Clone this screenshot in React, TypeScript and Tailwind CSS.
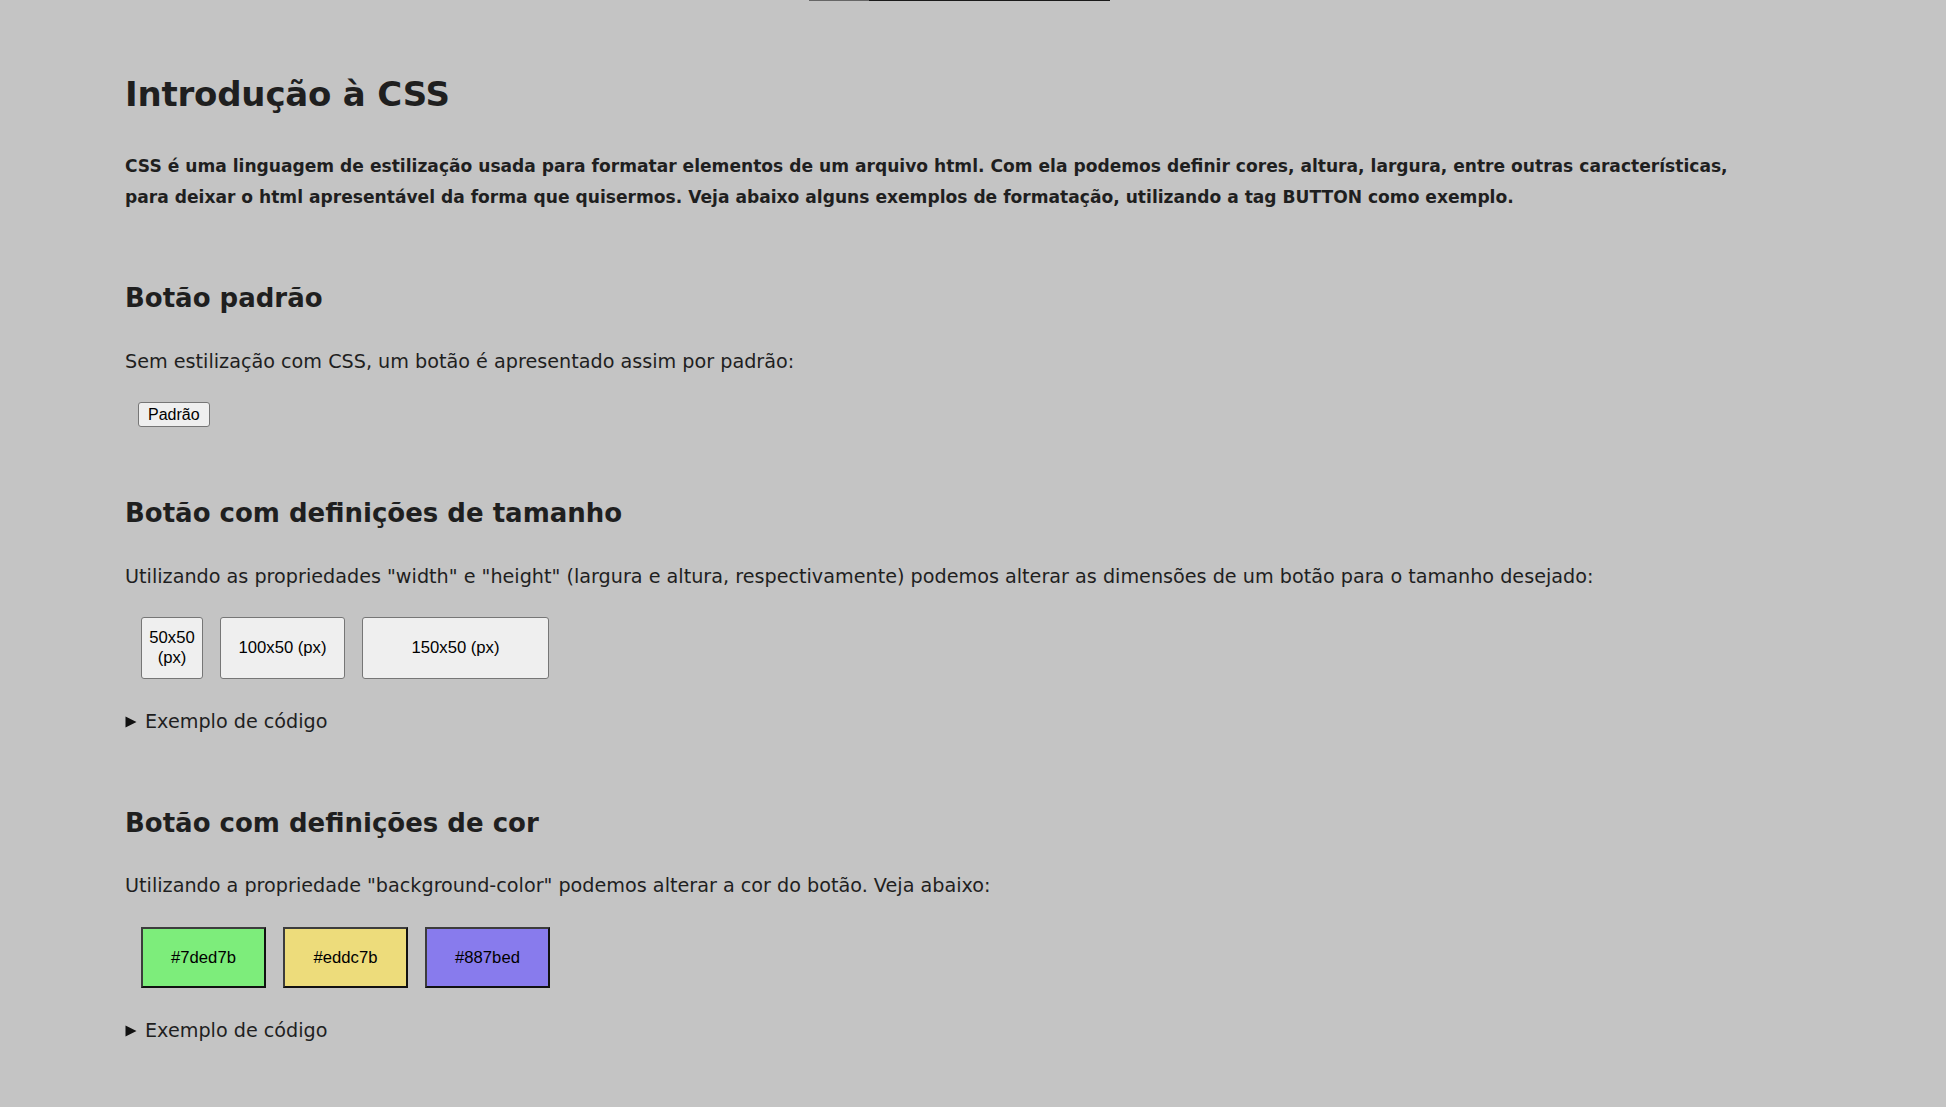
import React from "react";

const font = { fontFamily: '"DejaVu Sans", Verdana, sans-serif' };

function Summary() {
  return (
    <div className="flex items-center h-[28px] text-[19.2px] leading-[28px] text-[#1f1f1f]">
      <svg width="12" height="12" viewBox="0 0 12 12" className="mr-[8px] shrink-0">
        <polygon points="0.5,0.5 11.5,6 0.5,11.5" fill="#111" />
      </svg>
      <span>Exemplo de código</span>
    </div>
  );
}

const btnFont = { fontFamily: '"Liberation Sans", Arial, sans-serif' };

export default function App() {
  return (
    <div className="min-h-[1107px] w-full bg-[#c4c4c4] text-[#1f1f1f]" style={font}>
      <div className="flex h-[1px]">
        <div className="ml-[809px] w-[60px] h-[1px] bg-[#666]" />
        <div className="w-[241px] h-[1px] bg-[#1a1a1a]" />
      </div>
      <div className="pl-[125px] flex flex-col items-start w-[1760px]">
        <h1 className="mt-[71px] h-[44px] text-[34px] leading-[44px] font-bold tracking-[-0.2px]">Introdução à CSS</h1>
        <p className="mt-[35px] text-[17.1px] leading-[31px] font-bold w-full">
          CSS é uma linguagem de estilização usada para formatar elementos de um arquivo html. Com ela podemos definir cores, altura, largura, entre outras características, para deixar o html apresentável da forma que quisermos. Veja abaixo alguns exemplos de formatação, utilizando a tag BUTTON como exemplo.
        </p>

        <h2 className="mt-[67px] h-[36px] text-[26px] leading-[36px] font-bold">Botão padrão</h2>
        <p className="mt-[32px] h-[28px] text-[19.2px] leading-[28px]">Sem estilização com CSS, um botão é apresentado assim por padrão:</p>
        <button
          className="mt-[26px] ml-[13px] h-[25px] px-[9px] text-[16px] leading-[19px] text-black bg-[#efefef] border border-[#767676] rounded-[3px]"
          style={btnFont}
        >
          Padrão
        </button>

        <h2 className="mt-[68px] h-[36px] text-[26px] leading-[36px] font-bold">Botão com definições de tamanho</h2>
        <p className="mt-[32px] h-[28px] text-[19.2px] leading-[28px] whitespace-nowrap">
          Utilizando as propriedades "width" e "height" (largura e altura, respectivamente) podemos alterar as dimensões de um botão para o tamanho desejado:
        </p>
        <div className="mt-[26px] ml-[16px] flex gap-[17px]" style={btnFont}>
          <button className="w-[62px] h-[62px] text-[16.67px] leading-[20px] text-black bg-[#efefef] border border-[#767676] rounded-[3px] px-[4px]">
            50x50 (px)
          </button>
          <button className="w-[125px] h-[62px] text-[16.67px] leading-[20px] text-black bg-[#efefef] border border-[#767676] rounded-[3px]">
            100x50 (px)
          </button>
          <button className="w-[187px] h-[62px] text-[16.67px] leading-[20px] text-black bg-[#efefef] border border-[#767676] rounded-[3px]">
            150x50 (px)
          </button>
        </div>
        <div className="mt-[29px]">
          <Summary />
        </div>

        <h2 className="mt-[69px] h-[36px] text-[26px] leading-[36px] font-bold">Botão com definições de cor</h2>
        <p className="mt-[31px] h-[28px] text-[19.2px] leading-[28px]">
          Utilizando a propriedade "background-color" podemos alterar a cor do botão. Veja abaixo:
        </p>
        <div className="mt-[27px] ml-[16px] flex gap-[17px]" style={btnFont}>
          <button className="w-[125px] h-[61px] text-[16.67px] text-black bg-[#7ded7b] border-2 border-t-[#3c3c3c] border-l-[#3c3c3c] border-b-[#111] border-r-[#111]">
            #7ded7b
          </button>
          <button className="w-[125px] h-[61px] text-[16.67px] text-black bg-[#eddc7b] border-2 border-t-[#3c3c3c] border-l-[#3c3c3c] border-b-[#111] border-r-[#111]">
            #eddc7b
          </button>
          <button className="w-[125px] h-[61px] text-[16.67px] text-black bg-[#887bed] border-2 border-t-[#3c3c3c] border-l-[#3c3c3c] border-b-[#111] border-r-[#111]">
            #887bed
          </button>
        </div>
        <div className="mt-[29px]">
          <Summary />
        </div>
      </div>
    </div>
  );
}
